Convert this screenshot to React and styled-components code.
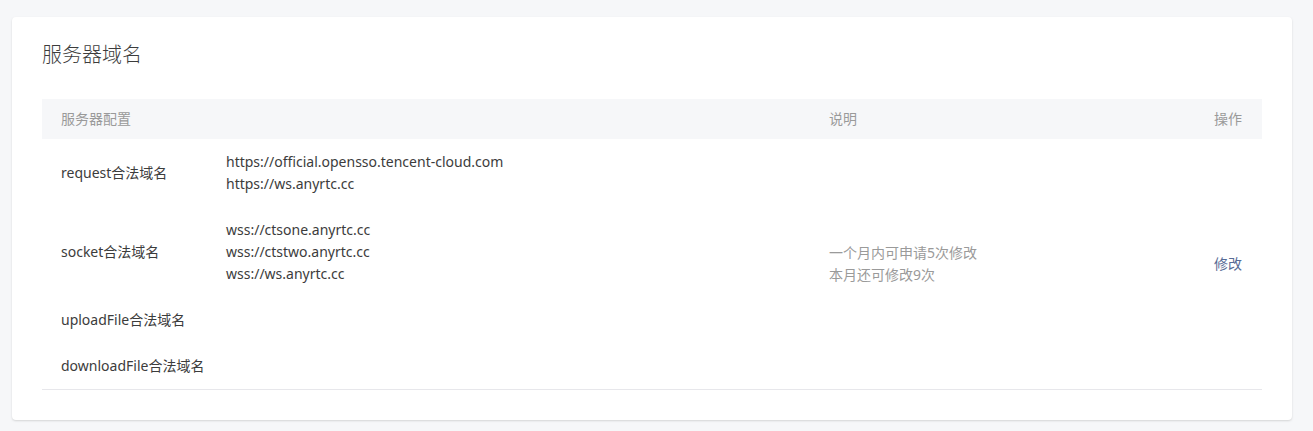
import React from 'react';
import styled, { createGlobalStyle } from 'styled-components';

const GlobalStyle = createGlobalStyle`
	body {
		margin: 0;
		background: #f6f7f9;
		font-family: "Noto Sans", "Noto Sans CJK SC", sans-serif;
		color: #353535;
	}
`;

const Page = styled.div`
	padding: 17px 21px 11px 12px;
`;

const Card = styled.div`
	background: #fff;
	border-radius: 4px;
	box-shadow: 0 1px 2px rgba(150, 150, 150, 0.35);
	padding: 24px 30px 30px;
`;

const Title = styled.h2`
	margin: 0 0 30px;
	font-size: 20px;
	font-weight: 300;
	line-height: 28px;
	color: #3c3c3c;
`;

const Table = styled.div`
	display: grid;
	grid-template-columns: 1fr 333px 100px;
	border-bottom: 1px solid #e7e7eb;
	font-size: 14px;
`;

const Head = styled.div`
	background: #f6f7f9;
	color: #9a9a9a;
	height: 40px;
	line-height: 40px;
	padding: 0 20px 0 ${p => (p.$first ? '19px' : '0')};
	text-align: ${p => (p.$align || 'left')};
`;

const ConfigCell = styled.div`
	padding: 0 0 0 19px;
`;

const ConfigRow = styled.div`
	display: grid;
	grid-template-columns: 165px 1fr;
	align-items: center;
	padding: 12px 0;
	line-height: 22px;
`;

const Label = styled.div`
	color: #3c3c3c;
`;

const Values = styled.div`
	color: #3c3c3c;
`;

const SideCell = styled.div`
	display: flex;
	flex-direction: column;
	justify-content: center;
	align-items: ${p => (p.$right ? 'flex-end' : 'flex-start')};
	padding-right: ${p => (p.$right ? '20px' : '0')};
	line-height: 22px;
	color: #9a9a9a;
`;

const Link = styled.a`
	color: #576b95;
	text-decoration: none;
	cursor: pointer;
`;

const rows = [
	{ label: 'request合法域名', values: ['https://official.opensso.tencent-cloud.com', 'https://ws.anyrtc.cc'] },
	{ label: 'socket合法域名', values: ['wss://ctsone.anyrtc.cc', 'wss://ctstwo.anyrtc.cc', 'wss://ws.anyrtc.cc'] },
	{ label: 'uploadFile合法域名', values: [] },
	{ label: 'downloadFile合法域名', values: [] },
];

export default function App() {
	return (
		<Page>
			<GlobalStyle />
			<Card>
				<Title>服务器域名</Title>
				<Table>
					<Head $first>服务器配置</Head>
					<Head>说明</Head>
					<Head $align="right">操作</Head>
					<ConfigCell>
						{rows.map(row => (
							<ConfigRow key={row.label}>
								<Label>{row.label}</Label>
								<Values>
									{row.values.map(v => (
										<div key={v}>{v}</div>
									))}
								</Values>
							</ConfigRow>
						))}
					</ConfigCell>
					<SideCell>
						<div>一个月内可申请5次修改</div>
						<div>本月还可修改9次</div>
					</SideCell>
					<SideCell $right>
						<Link>修改</Link>
					</SideCell>
				</Table>
			</Card>
		</Page>
	);
}
